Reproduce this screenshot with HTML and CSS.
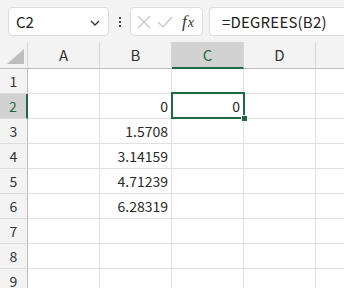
FILE: index.html
```html
<!DOCTYPE html>
<html>
<head>
<meta charset="utf-8">
<link rel="stylesheet" href="styles.css">
</head>
<body>
<div class="app">
  <div class="toolbar">
    <div class="namebox">
      <span class="name">C2</span>
      <svg class="chev" width="10" height="6" viewBox="0 0 10 6"><path d="M1 1 L5 5 L9 1" fill="none" stroke="#333" stroke-width="1.3"/></svg>
    </div>
    <div class="dots"><span></span><span></span><span></span></div>
    <div class="btnbox">
      <svg class="ico" width="14" height="14" viewBox="0 0 14 14"><path d="M1 1 L13 13 M13 1 L1 13" stroke="#c4c4c4" stroke-width="1.2" fill="none"/></svg>
      <svg class="ico" width="16" height="14" viewBox="0 0 16 14"><path d="M1 7 L6 12 L15 2" stroke="#c4c4c4" stroke-width="1.2" fill="none"/></svg>
      <span class="fx"><i>f</i><i class="x">x</i></span>
    </div>
    <div class="formula">=DEGREES(B2)</div>
  </div>
  <div class="sheet">
    <div class="grid">
      <div class="corner"><span class="tri"></span></div>
      <div class="ch">A</div><div class="ch">B</div><div class="ch sel">C</div><div class="ch">D</div><div class="ch last"></div>

      <div class="rh">1</div><div class="c"></div><div class="c"></div><div class="c"></div><div class="c"></div><div class="c last"></div>
      <div class="rh sel">2</div><div class="c"></div><div class="c num">0</div><div class="c num">0</div><div class="c"></div><div class="c last"></div>
      <div class="rh">3</div><div class="c"></div><div class="c num">1.5708</div><div class="c"></div><div class="c"></div><div class="c last"></div>
      <div class="rh">4</div><div class="c"></div><div class="c num">3.14159</div><div class="c"></div><div class="c"></div><div class="c last"></div>
      <div class="rh">5</div><div class="c"></div><div class="c num">4.71239</div><div class="c"></div><div class="c"></div><div class="c last"></div>
      <div class="rh">6</div><div class="c"></div><div class="c num">6.28319</div><div class="c"></div><div class="c"></div><div class="c last"></div>
      <div class="rh">7</div><div class="c"></div><div class="c"></div><div class="c"></div><div class="c"></div><div class="c last"></div>
      <div class="rh">8</div><div class="c"></div><div class="c"></div><div class="c"></div><div class="c"></div><div class="c last"></div>
      <div class="rh">9</div><div class="c"></div><div class="c"></div><div class="c"></div><div class="c"></div><div class="c last"></div>
    </div>
    <div class="selection"><span class="handle"></span></div>
  </div>
</div>
</body>
</html>
```
FILE: styles.css
```css
html, body {
  margin: 0;
  padding: 0;
  background: #f3f3f3;
}
body {
  font-family: "Noto Sans CJK JP", "Noto Sans", sans-serif;
  color: #222;
  overflow: hidden;
  width: 344px;
  height: 288px;
}
.toolbar {
  height: 42px;
  display: flex;
  align-items: flex-start;
  padding-top: 7px;
  padding-left: 8px;
  box-sizing: border-box;
}
.namebox {
  width: 101px;
  height: 29px;
  box-sizing: border-box;
  background: #fff;
  border: 1px solid #dcdcdc;
  border-radius: 4px;
  display: flex;
  align-items: center;
  justify-content: space-between;
  padding: 0 8px 0 7px;
}
.name {
  font-size: 15px;
  color: #222;
  line-height: 1;
}
.chev { margin-top: 2px; }
.dots {
  width: 21px;
  height: 29px;
  display: flex;
  flex-direction: column;
  align-items: center;
  justify-content: center;
  gap: 2px;
}
.dots span {
  width: 2px;
  height: 2px;
  background: #444;
}
.btnbox {
  width: 73px;
  height: 29px;
  box-sizing: border-box;
  background: #fff;
  border: 1px solid #dcdcdc;
  border-radius: 4px;
  display: flex;
  align-items: center;
  padding-left: 6px;
  gap: 6px;
}
.fx {
  font-family: "Liberation Serif", serif;
  font-size: 17px;
  color: #333;
  margin-left: 3px;
  line-height: 1;
}
.fx .x { font-size: 14px; margin-left: 1px; }
.formula {
  margin-left: 6px;
  flex: 1;
  height: 29px;
  box-sizing: border-box;
  background: #fff;
  border: 1px solid #dcdcdc;
  border-right: none;
  border-radius: 4px 0 0 4px;
  font-size: 15px;
  line-height: 27px;
  padding-left: 12px;
  color: #222;
  letter-spacing: 0.2px;
}
.sheet {
  position: relative;
  background: #fff;
}
.grid {
  display: grid;
  grid-template-columns: 28px 72px 72px 72px 72px 28px;
  grid-template-rows: 27px repeat(9, 25px);
}
.corner {
  background: #f3f3f3;
  border-right: 1px solid #d6d6d6;
  border-bottom: 1px solid #bdbdbd;
  position: relative;
}
.tri {
  position: absolute;
  right: 3px;
  bottom: 4px;
  width: 0;
  height: 0;
  border-left: 17px solid transparent;
  border-bottom: 15px solid #bdbdbd;
}
.ch {
  background: #f3f3f3;
  border-right: 1px solid #d6d6d6;
  border-bottom: 1px solid #bdbdbd;
  font-size: 15px;
  text-align: center;
  line-height: 26px;
  color: #333;
}
.ch.sel {
  background: #d2d2d2;
  color: #1e6b41;
  border-bottom: 2px solid #1e6b41;
  line-height: 25px;
}
.ch.last { border-right: none; }
.rh {
  background: #f3f3f3;
  border-right: 1px solid #bdbdbd;
  border-bottom: 1px solid #dcdcdc;
  font-size: 14px;
  text-align: center;
  line-height: 24px;
  color: #333;
}
.rh.sel {
  background: #d2d2d2;
  color: #1e6b41;
  border-right: 2px solid #1e6b41;
}
.c {
  border-right: 1px solid #e1e1e1;
  border-bottom: 1px solid #e1e1e1;
  font-size: 14px;
  line-height: 24px;
  color: #2a2a2a;
}
.c.last { border-right: none; }
.num {
  text-align: right;
  padding-right: 3px;
}
.selection {
  position: absolute;
  left: 171px;
  top: 50px;
  width: 74px;
  height: 27px;
  box-sizing: border-box;
  border: 2px solid #1e6b41;
  pointer-events: none;
}
.handle {
  position: absolute;
  right: -5px;
  bottom: -5px;
  width: 5px;
  height: 5px;
  background: #1e6b41;
  border: 1px solid #fff;
}
```
